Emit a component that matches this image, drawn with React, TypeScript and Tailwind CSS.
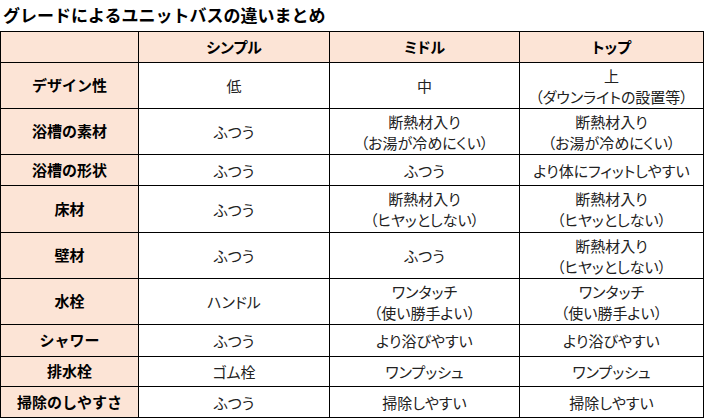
import React from "react";

type Row = { label: string; h: string; cells: string[][] };

const rows: Row[] = [
  { label: "デザイン性", h: "h-[45px]", cells: [["低"], ["中"], ["上", "（ダウンライトの設置等）"]] },
  { label: "浴槽の素材", h: "h-[45px]", cells: [["ふつう"], ["断熱材入り", "（お湯が冷めにくい）"], ["断熱材入り", "（お湯が冷めにくい）"]] },
  { label: "浴槽の形状", h: "h-[30px]", cells: [["ふつう"], ["ふつう"], ["より体にフィットしやすい"]] },
  { label: "床材", h: "h-[46px]", cells: [["ふつう"], ["断熱材入り", "（ヒヤッとしない）"], ["断熱材入り", "（ヒヤッとしない）"]] },
  { label: "壁材", h: "h-[45px]", cells: [["ふつう"], ["ふつう"], ["断熱材入り", "（ヒヤッとしない）"]] },
  { label: "水栓", h: "h-[45px]", cells: [["ハンドル"], ["ワンタッチ", "（使い勝手よい）"], ["ワンタッチ", "（使い勝手よい）"]] },
  { label: "シャワー", h: "h-[31px]", cells: [["ふつう"], ["より浴びやすい"], ["より浴びやすい"]] },
  { label: "排水栓", h: "h-[29px]", cells: [["ゴム栓"], ["ワンプッシュ"], ["ワンプッシュ"]] },
  { label: "掃除のしやすさ", h: "h-[30px]", cells: [["ふつう"], ["掃除しやすい"], ["掃除しやすい"]] },
];

export default function App() {
  return (
    <div className="w-[709px] h-[419px] bg-white overflow-hidden [font-family:'Noto_Sans_CJK_JP',sans-serif]">
      <div className="h-[31px] pl-[3px] pb-[2px] flex items-center text-[17px] font-bold text-black leading-none">
        グレードによるユニットバスの違いまとめ
      </div>
      <div className="w-[704px] grid grid-cols-[137px_190px_189px_183px] gap-px p-px bg-black">
        <div className="h-[30px] bg-[#fce4d6]" />
        {["シンプル", "ミドル", "トップ"].map((t) => (
          <div
            key={t}
            className="h-[30px] bg-[#fce4d6] flex items-center justify-center text-[15px] font-bold text-black [font-feature-settings:'palt']"
          >
            {t}
          </div>
        ))}
        {rows.map((r) => (
          <React.Fragment key={r.label}>
            <div className={`${r.h} bg-[#fce4d6] flex items-center justify-center text-[15px] font-bold text-black`}>
              {r.label}
            </div>
            {r.cells.map((c, i) => (
              <div
                key={i}
                className={`${r.h} bg-white flex flex-col items-center justify-center text-[15px] leading-[21px] text-[#222] [font-feature-settings:'palt']`}
              >
                {c.map((l, j) => (
                  <span key={j}>{l}</span>
                ))}
              </div>
            ))}
          </React.Fragment>
        ))}
      </div>
    </div>
  );
}
